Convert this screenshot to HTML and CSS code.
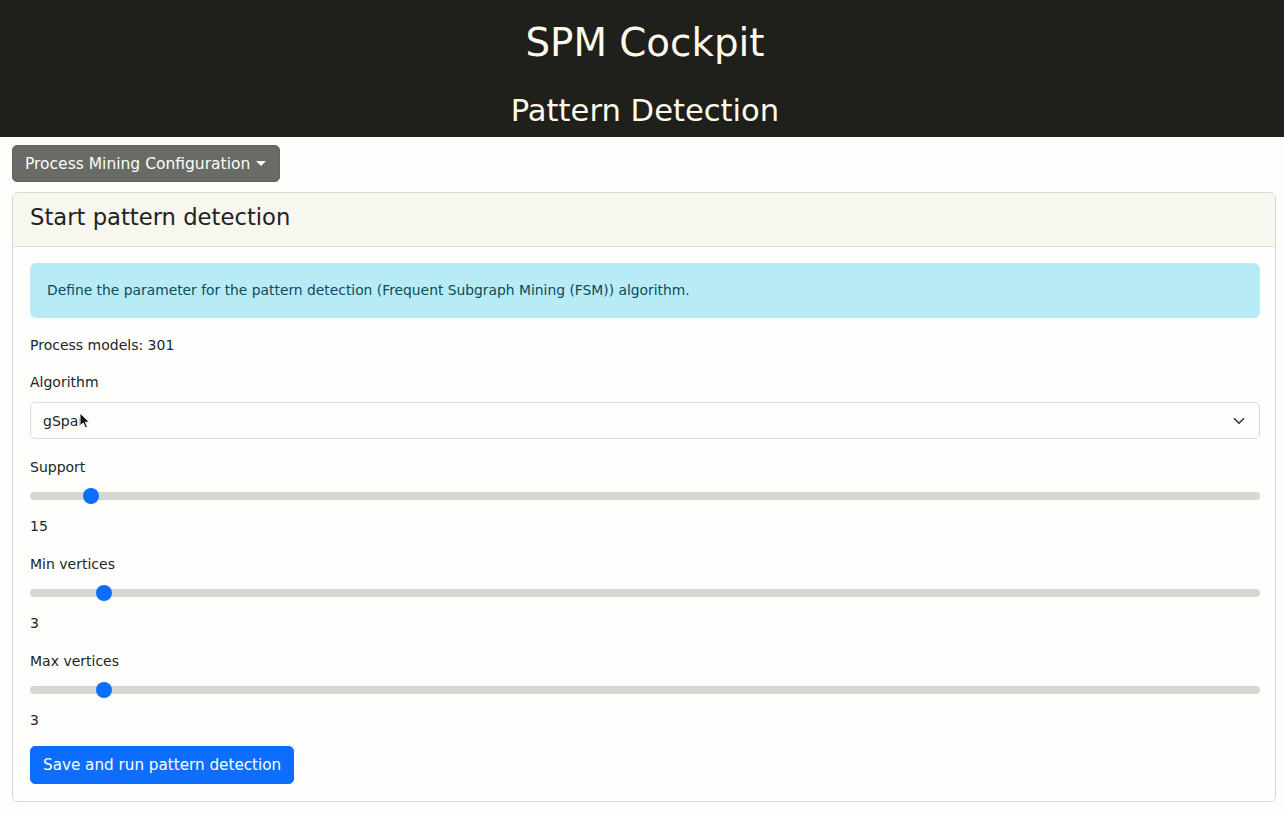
FILE: index.html
```html
<!DOCTYPE html>
<html lang="en">
<head>
    <meta charset="UTF-8">
    <meta name="viewport" content="width=device-width, initial-scale=1.0">
    <title>SPM Cockpit - Pattern Detection</title>
    <link rel="stylesheet" href="styles.css">
</head>
<body>
    <header class="page-header">
        <h1>SPM Cockpit</h1>
        <h2>Pattern Detection</h2>
    </header>

    <main class="content">
        <button class="dropdown-toggle" type="button">Process Mining Configuration <span class="caret"></span></button>

        <div class="card">
            <div class="card-header">
                <h3>Start pattern detection</h3>
            </div>
            <div class="card-body">
                <div class="alert-info">Define the parameter for the pattern detection (Frequent Subgraph Mining (FSM)) algorithm.</div>

                <p class="models">Process models: 301</p>

                <label class="field-label" for="algorithm">Algorithm</label>
                <div class="select-wrap">
                    <select id="algorithm" class="form-select">
                        <option>gSpan</option>
                    </select>
                    <svg class="chevron" width="12" height="12" viewBox="0 0 16 16"><path d="M2 5l6 6 6-6" fill="none" stroke="#343a40" stroke-width="2.2" stroke-linecap="round" stroke-linejoin="round"/></svg>
                    <svg class="cursor" width="12" height="18" viewBox="0 0 12 18"><path d="M1 1v13l3.2-3 2.3 5 2-0.9-2.2-4.9H10.5z" fill="#111" stroke="#fff" stroke-width="1"/></svg>
                </div>

                <div class="range-group">
                    <label class="field-label" for="support">Support</label>
                    <input type="range" id="support" class="form-range" min="1" max="321" value="15">
                    <div class="range-value">15</div>
                </div>

                <div class="range-group">
                    <label class="field-label" for="min-vertices">Min vertices</label>
                    <input type="range" id="min-vertices" class="form-range" min="1" max="38" value="3">
                    <div class="range-value">3</div>
                </div>

                <div class="range-group last">
                    <label class="field-label" for="max-vertices">Max vertices</label>
                    <input type="range" id="max-vertices" class="form-range" min="1" max="38" value="3">
                    <div class="range-value">3</div>
                </div>

                <button class="btn-primary" type="button">Save and run pattern detection</button>
            </div>
        </div>
    </main>
</body>
</html>
```

FILE: styles.css
```css
body {
    font-family: 'DejaVu Sans', Verdana, sans-serif;
    font-size: 14px;
    line-height: 19px;
    color: #212529;
    margin: 0;
    background-color: #fdfdfb;
}
.page-header {
    background-color: #1f1f1c;
    color: #fffbea;
    text-align: center;
    height: 137px;
    display: flex;
    flex-direction: column;
    align-items: center;
    padding: 20px 0 0 6px;
    box-sizing: border-box;
}
.page-header h1 {
    font-size: 38.8px;
    font-weight: normal;
    line-height: 46px;
    margin: 0;
}
.page-header h2 {
    font-size: 30.6px;
    font-weight: normal;
    line-height: 40px;
    margin: 25px 0 0;
}
.content {
    padding: 8px 8px 12px 12px;
}
.dropdown-toggle {
    font-family: inherit;
    font-size: 15.5px;
    height: 37px;
    padding: 0 13px 0 12px;
    background-color: #6a6b67;
    color: #fdfdf8;
    border: 1px solid #62645f;
    border-radius: 5px;
    display: flex;
    align-items: center;
    gap: 6px;
}
.caret {
    width: 0;
    height: 0;
    border-left: 5px solid transparent;
    border-right: 5px solid transparent;
    border-top: 5px solid #fdfdf8;
}
.card {
    margin-top: 10px;
    border: 1px solid #d9d9d3;
    border-radius: 6px;
    background-color: #fefefc;
}
.card-header {
    height: 53px;
    display: flex;
    align-items: center;
    padding: 0 17px;
    background-color: #f7f7ef;
    border-bottom: 1px solid #dcdcd6;
    border-radius: 6px 6px 0 0;
}
.card-header h3 {
    margin: 0 0 5px;
    font-size: 22.7px;
    font-weight: normal;
    color: #222;
}
.card-body {
    padding: 16px 15px 17px 17px;
}
.alert-info {
    background-color: #b7ecf7;
    color: #0e4a57;
    border-radius: 6px;
    height: 55px;
    display: flex;
    align-items: center;
    padding: 0 17px;
    font-size: 13.85px;
}
.models {
    margin: 18px 0 18px;
}
.field-label {
    display: block;
}
.select-wrap {
    position: relative;
    margin-top: 10px;
    margin-bottom: 19px;
}
.form-select {
    appearance: none;
    -webkit-appearance: none;
    width: 100%;
    height: 37px;
    padding: 0 12px;
    font-family: inherit;
    font-size: 14px;
    color: #212529;
    background-color: #fdfdfb;
    border: 1px solid #dcdcd6;
    border-radius: 5px;
}
.chevron {
    position: absolute;
    right: 15px;
    top: 13px;
}
.cursor {
    position: absolute;
    left: 49px;
    top: 10px;
}
.range-group {
    margin-bottom: 19px;
}
.range-group.last {
    margin-bottom: 16px;
}
.form-range {
    appearance: none;
    -webkit-appearance: none;
    display: block;
    width: 100%;
    height: 16px;
    margin: 11px 0 13px;
    padding: 0;
    background: transparent;
}
.form-range::-webkit-slider-runnable-track {
    height: 8px;
    background-color: #d6d6d2;
    border-radius: 4px;
}
.form-range::-webkit-slider-thumb {
    -webkit-appearance: none;
    width: 16px;
    height: 16px;
    margin-top: -4px;
    border-radius: 50%;
    background-color: #0d6efd;
    border: none;
}
.btn-primary {
    font-family: inherit;
    font-size: 15.2px;
    height: 38px;
    padding: 0 12px;
    background-color: #0d6efd;
    color: #fff;
    border: 1px solid #0d6efd;
    border-radius: 5px;
}
```
